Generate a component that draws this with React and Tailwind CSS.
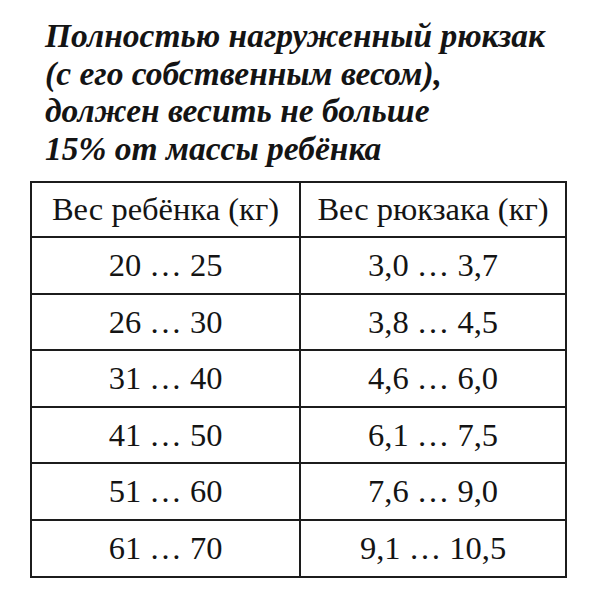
import React from 'react';

const rows = [
    ['20 … 25', '3,0 … 3,7'],
    ['26 … 30', '3,8 … 4,5'],
    ['31 … 40', '4,6 … 6,0'],
    ['41 … 50', '6,1 … 7,5'],
    ['51 … 60', '7,6 … 9,0'],
    ['61 … 70', '9,1 … 10,5'],
];

const App = () => {
    return (
        <div className="w-[600px] h-[600px] bg-white text-[#141414] overflow-hidden font-['Liberation_Serif','Times_New_Roman',serif]">
            {/* Title */}
            <div className="pl-[45px] pt-[17px] text-[33.5px] leading-[37.5px] font-bold italic">
                <div>Полностью нагруженный рюкзак</div>
                <div>(с его собственным весом),</div>
                <div>должен весить не больше</div>
                <div>15% от массы ребёнка</div>
            </div>

            {/* Table */}
            <table className="ml-[30px] mt-[14px] w-[537px] border-collapse border-2 border-[#1c1c1c] text-[32.5px] text-center">
                <thead>
                    <tr className="h-[55px]">
                        <th className="font-normal border-2 border-[#1c1c1c] w-[269px]">Вес ребёнка (кг)</th>
                        <th className="font-normal border-2 border-[#1c1c1c]">Вес рюкзака (кг)</th>
                    </tr>
                </thead>
                <tbody>
                    {rows.map((r) => (
                        <tr key={r[0]} className="h-[56.6px]">
                            <td className="border-2 border-[#1c1c1c]">{r[0]}</td>
                            <td className="border-2 border-[#1c1c1c]">{r[1]}</td>
                        </tr>
                    ))}
                </tbody>
            </table>
        </div>
    );
};

export default App;
